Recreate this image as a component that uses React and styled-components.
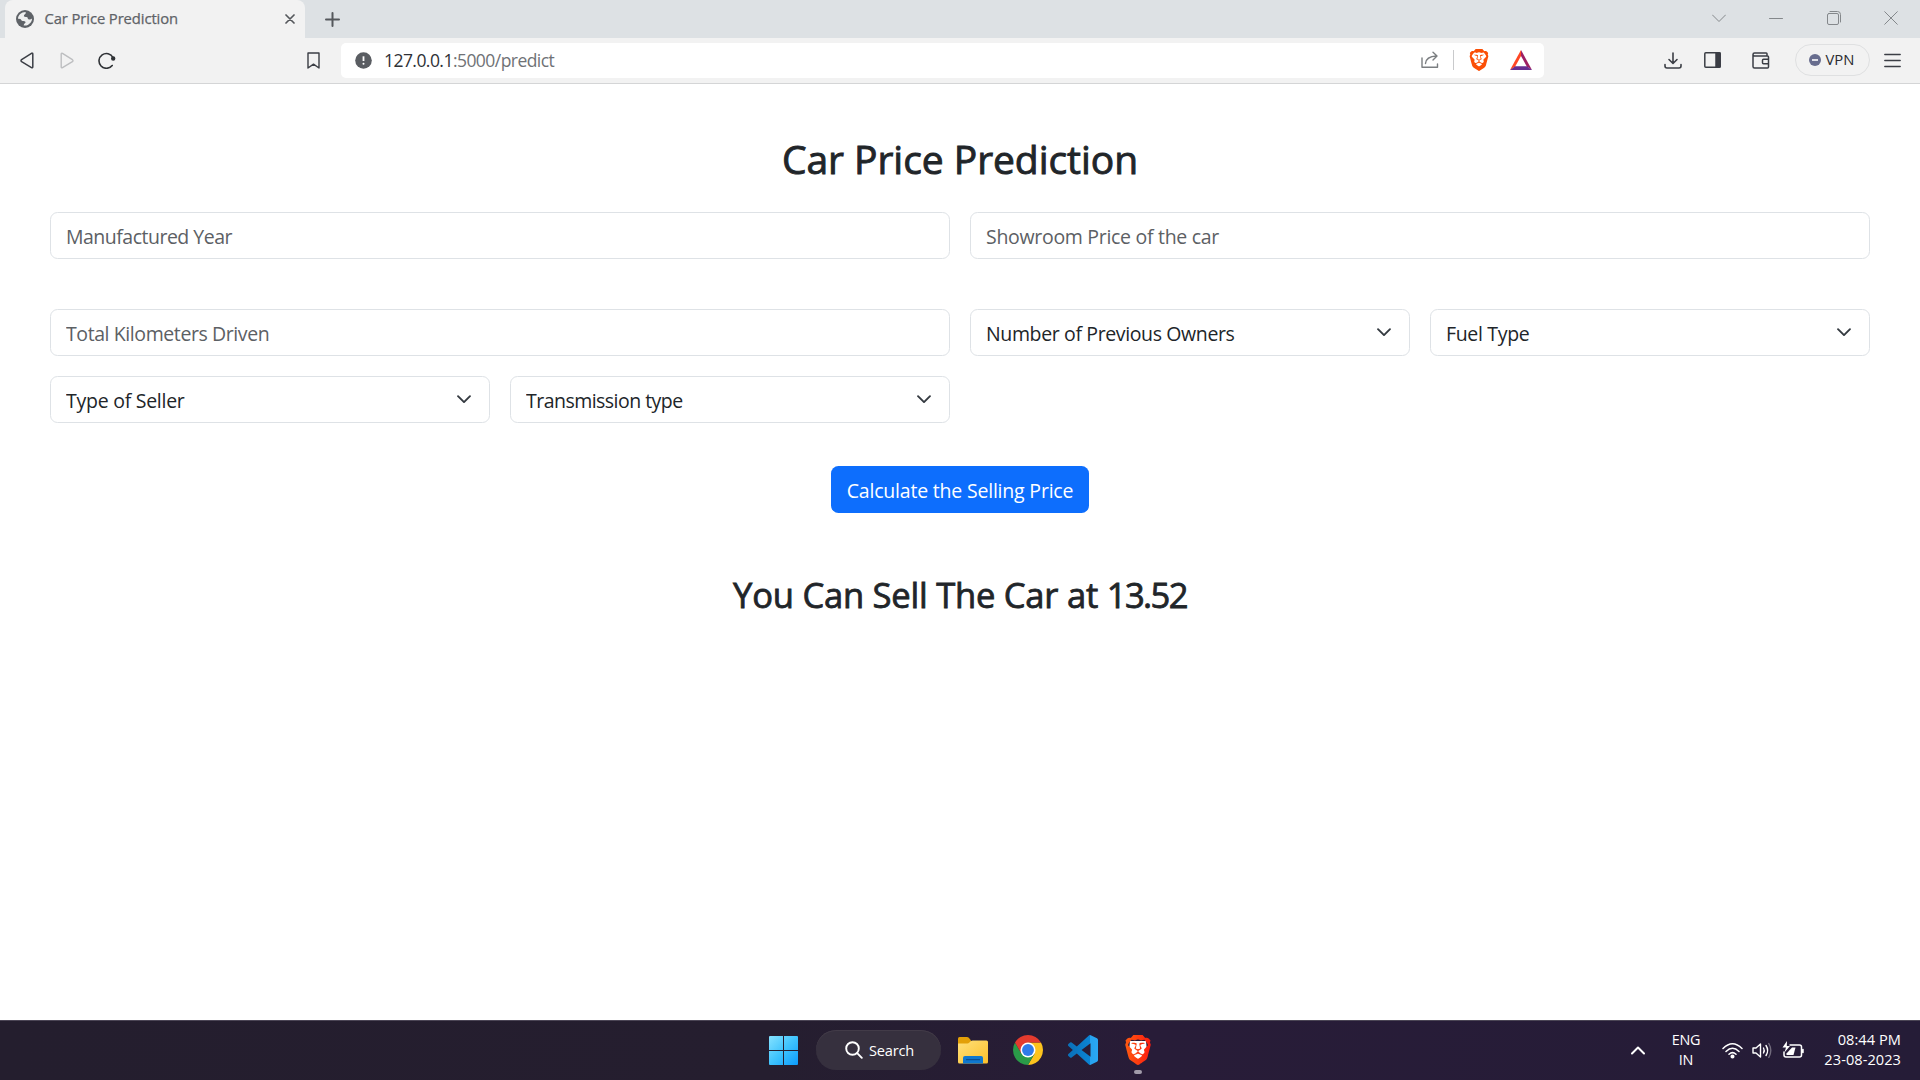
import React from "react";
import styled, { createGlobalStyle } from "styled-components";
import { SiBrave } from "react-icons/si";

const GlobalStyle = createGlobalStyle`
  *, *::before, *::after { box-sizing: border-box; }
  body { margin: 0; overflow: hidden; background: #fff; }
  svg { display: block; flex: none; }
`;

const Screen = styled.div`
  display: flex;
  flex-direction: column;
  width: 1920px;
  height: 1080px;
  overflow: hidden;
  background: #fff;
  font-family: "Open Sans", "Noto Sans", sans-serif;
`;

/* ---------- browser chrome ---------- */

const TabStrip = styled.header`
  display: flex;
  align-items: stretch;
  height: 38px;
  padding-left: 5px;
  background: #dde1e4;
`;

const Tab = styled.div`
  display: flex;
  align-items: center;
  width: 300px;
  padding: 0 10px 0 11px;
  border-radius: 8px 8px 0 0;
  background: #f2f2f2;
  color: #5f6368;
`;

const TabTitle = styled.span`
  flex: 1;
  margin: 0 0 2px 10.5px;
  font-size: 14.8px;
  font-weight: 400;
  line-height: 20px;
  letter-spacing: -0.1px;
  -webkit-text-stroke: 0.25px currentColor;
  white-space: nowrap;
`;

const PlainButton = styled.button`
  display: flex;
  align-items: center;
  justify-content: center;
  flex: none;
  margin: 0 0 0 ${(p) => p.$gap || 0}px;
  padding: 0;
  border: 0;
  background: none;
  color: ${(p) => p.$color || "#3b3e45"};
`;

const WindowControls = styled.div`
  display: flex;
  align-items: center;
  gap: 43.5px;
  margin-left: auto;
  padding: 0 22px 2px 0;
`;

const Toolbar = styled.nav`
  display: flex;
  align-items: center;
  height: 46px;
  padding: 0 18px 1px 18px;
  border-bottom: 1px solid #d4d5d6;
  background: #f2f2f2;
`;

const AddressBar = styled.div`
  display: flex;
  align-items: center;
  width: 1203px;
  height: 35px;
  margin-left: 21px;
  padding: 0 12px 0 14px;
  border-radius: 5px;
  background: #fff;
`;

const Url = styled.span`
  flex: 1;
  margin-left: 12px;
  font-size: 17.5px;
  line-height: 24px;
  letter-spacing: -0.55px;
  color: #6f7276;
  b { font-weight: 400; color: #2f3136; }
`;

const Divider = styled.i`
  width: 1px;
  height: 20px;
  margin: 0 14px 0 14px;
  background: #c9cacc;
`;

const VpnPill = styled.button`
  display: flex;
  align-items: center;
  gap: 5px;
  width: 75px;
  height: 32px;
  margin: 0 0 0 25px;
  padding: 0 0 0 13px;
  border: 1px solid #dfe0e1;
  border-radius: 16px;
  background: transparent;
  color: #2b2c30;
  font: 400 14.8px/20px "Open Sans", sans-serif;
  letter-spacing: 0;
`;

const VpnLabel = styled.span`
  margin-bottom: 2px;
`;

/* ---------- page ---------- */

const Page = styled.main`
  display: flex;
  flex-direction: column;
  align-items: center;
  height: 936px;
  padding: 47px 50px 0;
  color: #212529;
`;

const Title = styled.h1`
  margin: 4px 0 0;
  height: 77px;
  font-size: 39px;
  font-weight: 400;
  line-height: 48px;
  letter-spacing: -0.05px;
  -webkit-text-stroke: 0.9px currentColor;
  white-space: nowrap;
`;

const Form = styled.form`
  display: grid;
  grid-template-columns: repeat(4, 1fr);
  column-gap: 20px;
  width: 100%;
`;

const Cell = styled.div`
  position: relative;
  grid-column: span ${(p) => p.$span};
  margin-bottom: ${(p) => p.$below || 0}px;
`;

const Input = styled.input`
  display: block;
  width: 100%;
  height: 47px;
  padding: 2px 15px 0;
  border: 1px solid #dee2e6;
  border-radius: 7.5px;
  outline: 0;
  background: #fff;
  font: 400 19.5px/30px "Open Sans", sans-serif;
  letter-spacing: ${(p) => p.$track}px;
  &::placeholder { color: #5c6064; opacity: 1; }
`;

const Select = styled.select`
  display: block;
  width: 100%;
  height: 47px;
  padding: 2px 45px 0 15px;
  border: 1px solid #dee2e6;
  border-radius: 7.5px;
  outline: 0;
  appearance: none;
  background: #fff;
  color: #212529;
  font: 400 19.5px/30px "Open Sans", sans-serif;
  letter-spacing: ${(p) => p.$track}px;
`;

const Caret = styled.span`
  position: absolute;
  top: 13px;
  right: 16px;
  pointer-events: none;
`;

const Submit = styled.button`
  width: 258px;
  height: 47px;
  margin: 43px 0 0;
  padding: 2px 0 0;
  border: 0;
  border-radius: 7.5px;
  background: #0d6efd;
  color: #fff;
  font: 400 19.5px/30px "Open Sans", sans-serif;
  letter-spacing: -0.2px;
  white-space: nowrap;
`;

const Result = styled.h2`
  margin: 60px 0 0;
  font-size: 34.6px;
  font-weight: 400;
  line-height: 44px;
  letter-spacing: -0.25px;
  -webkit-text-stroke: 0.8px currentColor;
  white-space: nowrap;
`;

const Amount = styled.span`
  letter-spacing: -1.6px;
`;

/* ---------- taskbar ---------- */

const Taskbar = styled.footer`
  display: grid;
  grid-template-columns: 769px 1fr auto;
  height: 60px;
  border-top: 1px solid #4b4555;
  background: linear-gradient(90deg, #241e2e 0%, #251e2f 40%, #281c38 60%, #251c37 100%);
  color: #fff;
`;

const Pinned = styled.div`
  grid-column: 2;
  display: flex;
  align-items: center;
`;

const SearchPill = styled.div`
  display: flex;
  align-items: center;
  gap: 6px;
  width: 125px;
  height: 40px;
  margin: 0 17px 1px 18px;
  padding-left: 29px;
  border-radius: 20px;
  background: #36303e;
  box-shadow: inset 0 1px 0 #423b48;
  font-size: 14.6px;
  line-height: 20px;
  letter-spacing: -0.2px;
`;

const AppSlot = styled.div`
  position: relative;
  width: 30px;
  height: 30px;
  margin: 0 25px 1px 0;
`;

const Running = styled.i`
  position: absolute;
  left: 11px;
  bottom: -9px;
  width: 8px;
  height: 4px;
  border-radius: 2px;
  background: #a19ba9;
`;

const Tray = styled.div`
  display: flex;
  align-items: center;
  padding-right: 19px;
`;

const TrayText = styled.div`
  width: ${(p) => p.$width}px;
  margin: 0 0 ${(p) => p.$lift || 0}px ${(p) => p.$gap}px;
  text-align: ${(p) => p.$align};
  font-size: ${(p) => p.$size}px;
  line-height: 20px;
  letter-spacing: ${(p) => p.$track}px;
  white-space: nowrap;
`;

const TrayIcons = styled.div`
  display: flex;
  align-items: center;
  gap: 9px;
  margin: 0 0 1px 16px;
`;

/* ---------- drawings ---------- */

const Line = ({ w, h, sw = 1.5, children }) => (
  <svg width={w} height={h} viewBox={`0 0 ${w} ${h}`} fill="none" stroke="currentColor" strokeWidth={sw} strokeLinecap="round" strokeLinejoin="round">
    {children}
  </svg>
);

const GlobeIcon = () => (
  <svg width="18" height="18" viewBox="0 0 18 18">
    <circle cx="9" cy="9" r="9" fill="#5f6368" />
    <path d="M2 8.800C2 4.800 5.400 1.900 9.600 1.900q.5 1.500-.4 2.200-1.600.9-1.300 2.100.8 1 2.300.8 1.600 0 1.600 1.400.3 1.300 1.800 1.100 1.300-.1 2.500-.9-.2 4.200-4.200 6.300-2.100 1-4.200.6.1-1.500.9-2 1.400-.5.8-1.700-.8-1-2.400-.8-1.500.1-1.700-1.100Q5 8.700 2 8.800z" fill="#eff0f0" />
  </svg>
);

const FolderIcon = () => (
  <svg width="30" height="30" viewBox="0 0 30 30">
    <defs>
      <linearGradient id="fold" x1="0" y1="0" x2="1" y2="1">
        <stop offset="0" stopColor="#ffe07a" />
        <stop offset="1" stopColor="#fcc02b" />
      </linearGradient>
    </defs>
    <path d="M0 3.5Q0 2 1.5 2H9q1 0 1.8.8L13 5.5V10H0z" fill="#e3a008" />
    <path d="M0 8.5h9.500q.9 0 1.600-.8L13 6q.6-.5 1.500-.5h14Q30 5.500 30 7v20q0 1.500-1.500 1.500h-27Q0 28.500 0 27z" fill="url(#fold)" />
    <path d="M5 28.500V23q0-2 2-2h16q2 0 2 2v5.500z" fill="#0f78cf" />
    <path d="M8.500 24.700h13" stroke="#0b4f94" strokeWidth="1.200" strokeLinecap="round" />
  </svg>
);

const ChromeIcon = () => (
  <svg width="30" height="30" viewBox="0 0 48 48">
    <path d="M24 12h20.780A24 24 0 0 1 24 48l10.390-18z" fill="#fcc31e" />
    <path d="M34.390 30L24 48A24 24 0 0 1 3.220 12l10.390 18z" fill="#2a9a48" />
    <path d="M13.610 30L3.220 12A24 24 0 0 1 44.780 12H24z" fill="#e33b2e" />
    <circle cx="24" cy="24" r="12" fill="#fff" />
    <circle cx="24" cy="24" r="9.500" fill="#2f7bea" />
  </svg>
);

const CodeIcon = () => (
  <svg width="30" height="30" viewBox="0 0 24 24">
    <defs>
      <linearGradient id="code" x1="0" y1="0" x2="1" y2="0">
        <stop offset="0" stopColor="#0a70b8" />
        <stop offset=".74" stopColor="#0b84d4" />
        <stop offset=".75" stopColor="#26a2ee" />
        <stop offset="1" stopColor="#2aa8f4" />
      </linearGradient>
    </defs>
    <path fill="url(#code)" d="M23.150 2.587L18.210.210a1.494 1.494 0 0 0-1.705.290l-9.460 8.630-4.120-3.128a.999.999 0 0 0-1.276.057L.327 7.261A1 1 0 0 0 .326 8.740L3.899 12 .326 15.260a1 1 0 0 0 .001 1.479L1.650 17.940a.999.999 0 0 0 1.276.057l4.120-3.128 9.460 8.630a1.492 1.492 0 0 0 1.704.290l4.942-2.377A1.500 1.500 0 0 0 24 20.060V3.939a1.500 1.500 0 0 0-.850-1.352zm-5.146 14.861L10.826 12l7.178-5.448v10.896z" />
  </svg>
);

const WindowsIcon = () => (
  <svg width="29" height="29" viewBox="0 0 29 29">
    <defs>
      <linearGradient id="win" gradientUnits="userSpaceOnUse" x1="0" y1="0" x2="29" y2="29">
        <stop offset="0" stopColor="#86e2ff" />
        <stop offset=".5" stopColor="#3fc3fd" />
        <stop offset="1" stopColor="#0c9bfb" />
      </linearGradient>
    </defs>
    <path fill="url(#win)" d="M1 0h13v14H0V1q0-1 1-1zM15 0h13q1 0 1 1v13H15zM0 15h14v14H1q-1 0-1-1zM15 15h14v13q0 1-1 1H15z" />
  </svg>
);

const BraveTaskIcon = () => (
  <svg width="30" height="30" viewBox="0 0 30 30">
    <defs>
      <linearGradient id="brave" x1="0" x2="1">
        <stop offset="0" stopColor="#ff5a10" />
        <stop offset="1" stopColor="#fb1c10" />
      </linearGradient>
    </defs>
    <path d="M7 6h16l1 10-4 6-5 3-5-3-4-6z" fill="#fff" />
    <SiBrave x="0" y="0" size={30} style={{ fill: "url(#brave)" }} />
  </svg>
);

const BatIcon = () => (
  <svg width="22" height="20" viewBox="0 0 22 20">
    <path d="M11 0L0 20l5.200-3.600L11 6z" fill="#ff4724" />
    <path d="M11 0l11 20-5.200-3.600L11 6z" fill="#9e1f63" />
    <path d="M0 20h22l-5.200-3.800H5.200z" fill="#662d91" />
  </svg>
);

const ChevronCaret = () => (
  <svg width="20" height="20" viewBox="0 0 16 16" fill="none" stroke="#343a40" strokeWidth="1.500" strokeLinecap="round" strokeLinejoin="round">
    <path d="M3.200 5.700L8 10.500l4.800-4.800" />
  </svg>
);

function SelectField({ label, track }) {
  return (
    <Cell $span={1}>
      <Select $track={track} defaultValue="">
        <option value="">{label}</option>
      </Select>
      <Caret><ChevronCaret /></Caret>
    </Cell>
  );
}

export default function App() {
  return (
    <Screen>
      <GlobalStyle />
      <TabStrip>
        <Tab>
          <GlobeIcon />
          <TabTitle>Car Price Prediction</TabTitle>
          <PlainButton $color="#55585c">
            <Line w={10} h={10} sw={1.7}><path d="M1 1l8 8M9 1L1 9" /></Line>
          </PlainButton>
        </Tab>
        <PlainButton $gap={19.5} $color="#55585c">
          <Line w={15} h={15} sw={2}><path d="M7.500 1v13M1 7.500h13" /></Line>
        </PlainButton>
        <WindowControls>
          <PlainButton $color="#84888b"><Line w={14} h={14} sw={1}><path d="M.5 4l6.500 6.500L13.500 4" /></Line></PlainButton>
          <PlainButton $color="#84888b"><Line w={14} h={14} sw={1}><path d="M.5 7.500h13" /></Line></PlainButton>
          <PlainButton $color="#84888b"><Line w={14} h={14} sw={1}><rect x=".5" y="2.500" width="11" height="11" rx="1.500" /><path d="M3 .5h7.500q3 0 3 3V11" /></Line></PlainButton>
          <PlainButton $color="#84888b"><Line w={14} h={14} sw={1}><path d="M.7.700l12.600 12.600M13.300.700L.7 13.300" /></Line></PlainButton>
        </WindowControls>
      </TabStrip>

      <Toolbar>
        <PlainButton $gap={2}>
          <Line w={14} h={17} sw={1.5}><path d="M12.800 2.200v12.600q0 1.400-1.300.8L1.600 9.600q-1.200-.9 0-1.900l9.900-6.400q1.300-.6 1.300.9z" /></Line>
        </PlainButton>
        <PlainButton $gap={26} $color="#bdbec0">
          <Line w={14} h={17} sw={1.4}><path d="M1.200 2.200v12.600q0 1.400 1.300.8l9.900-6q1.200-.9 0-1.900L2.500 1.300q-1.300-.6-1.300.9z" /></Line>
        </PlainButton>
        <PlainButton $gap={24} $color="#303337">
          <Line w={18} h={17} sw={1.6}><path d="M14.200 13.500A7.400 7.400 0 1 1 15 5.500" /><circle cx="15.200" cy="6.500" r="1.400" fill="currentColor" /></Line>
        </PlainButton>
        <PlainButton $gap={191}>
          <Line w={13} h={17} sw={1.4}><path d="M1 1h11v15l-5.500-3.800L1 16z" /></Line>
        </PlainButton>
        <AddressBar>
          <svg width="17" height="17" viewBox="0 0 17 17">
            <circle cx="8.500" cy="8.500" r="8.300" fill="#5a5d62" />
            <path d="M8.500 4.300v4.700" stroke="#fff" strokeWidth="1.800" />
            <circle cx="8.500" cy="11.700" r="1" fill="#fff" />
          </svg>
          <Url><b>127.0.0.1</b>:5000/predict</Url>
          <PlainButton $color="#7b7e81">
            <Line w={18} h={18} sw={1.4}><path d="M1 7v9.200h15.500V13M4.500 12.500Q5 5.500 15.500 5M12 1.200L16 5l-4 4" /></Line>
          </PlainButton>
          <Divider />
          <SiBrave size={22} color="#fb4f07" />
          <PlainButton $gap={20}><BatIcon /></PlainButton>
        </AddressBar>
        <PlainButton $gap={119.5}>
          <Line w={18} h={17} sw={1.600}><path d="M9 1v10M5 7.500L9 11.500l4-4M1 12.500V14q0 2 2 2h12q2 0 2-2v-1.500" /></Line>
        </PlainButton>
        <PlainButton $gap={22.5}>
          <Line w={17} h={16} sw={1.5}><rect x=".8" y=".8" width="15.400" height="14.400" rx="1" /><path d="M12 1h4v14h-4z" fill="currentColor" /></Line>
        </PlainButton>
        <PlainButton $gap={30.5}>
          <Line w={18} h={17} sw={1.5}><path d="M15 4V1.800q0-.8-.8-.8H2.500Q1 1 1 2.500T2.500 4h13q1 0 1 1v10q0 1-1 1H2.500Q1 16 1 14.500v-12M16.500 7.300h-5q-1 0-1 1v2.400q0 1 1 1h5z" /></Line>
        </PlainButton>
        <VpnPill>
          <svg width="12" height="12" viewBox="0 0 12 12"><circle cx="6" cy="6" r="6" fill="#686d8e" /><path d="M3 6h6" stroke="#fff" strokeWidth="1.600" /></svg>
          <VpnLabel>VPN</VpnLabel>
        </VpnPill>
        <PlainButton $gap={14.5}>
          <Line w={17} h={15} sw={1.4}><path d="M.8 1.500h15.400M.8 7.500h15.400M.8 13.500h15.400" /></Line>
        </PlainButton>
      </Toolbar>

      <Page>
        <Title>Car Price Prediction</Title>
        <Form>
          <Cell $span={2} $below={50}><Input $track={-0.5} placeholder="Manufactured Year" /></Cell>
          <Cell $span={2} $below={50}><Input $track={-0.3} placeholder="Showroom Price of the car" /></Cell>
          <Cell $span={2} $below={20}><Input $track={-0.41} placeholder="Total Kilometers Driven" /></Cell>
          <SelectField label="Number of Previous Owners" track={-0.37} />
          <SelectField label="Fuel Type" track={-0.33} />
          <SelectField label="Type of Seller" track={-0.26} />
          <SelectField label="Transmission type" track={-0.53} />
        </Form>
        <Submit type="button">Calculate the Selling Price</Submit>
        <Result>You Can Sell The Car at <Amount>13.52</Amount></Result>
      </Page>

      <Taskbar>
        <Pinned>
          <WindowsIcon />
          <SearchPill>
            <Line w={18} h={18} sw={1.9}><circle cx="7.500" cy="7.500" r="6.300" /><path d="M12.200 12.200l4.600 4.600" /></Line>
            Search
          </SearchPill>
          <AppSlot><FolderIcon /></AppSlot>
          <AppSlot><ChromeIcon /></AppSlot>
          <AppSlot><CodeIcon /></AppSlot>
          <AppSlot><BraveTaskIcon /><Running /></AppSlot>
        </Pinned>
        <Tray>
          <Line w={14} h={10} sw={2}><path d="M1 7.500l6-6 6 6" /></Line>
          <TrayText $width={40} $gap={21} $lift={1} $align="center" $size={14.4} $track={-0.2}>ENG<br />IN</TrayText>
          <TrayIcons>
            <Line w={21} h={17} sw={1.5}>
              <path d="M1 6.500Q10.500-3.200 20 6.500M4 9.500q6.500-6.500 13 0M7 12.300q3.500-3.300 7 0" />
              <circle cx="10.500" cy="14.500" r="1.300" fill="currentColor" />
            </Line>
            <Line w={21} h={17} sw={1.4}>
              <path d="M1 6v5h3l4.500 4V2L4 6zM11.500 6q1.500 2.500 0 5M14 3.500q3.300 5 0 10" />
              <path d="M16.800 1.500q4 7 0 14" opacity=".35" />
            </Line>
            <Line w={22} h={18} sw={1.5}>
              <path d="M8 4h9.500q2 0 2 2v8q0 2-2 2H4q-2 0-2-2v-3M21 8.500v3" />
              <path d="M10 6.500h3.500L11.500 14H4.500l0-1.500z" fill="currentColor" stroke="none" />
              <path d="M5 0L.5 6.500H4L2.500 11.500 8 5H4.800z" fill="currentColor" stroke="none" />
            </Line>
          </TrayIcons>
          <TrayText $width={82} $gap={15} $lift={4} $align="right" $size={14.6} $track={0.05}>08:44 PM<br />23-08-2023</TrayText>
        </Tray>
      </Taskbar>
    </Screen>
  );
}
